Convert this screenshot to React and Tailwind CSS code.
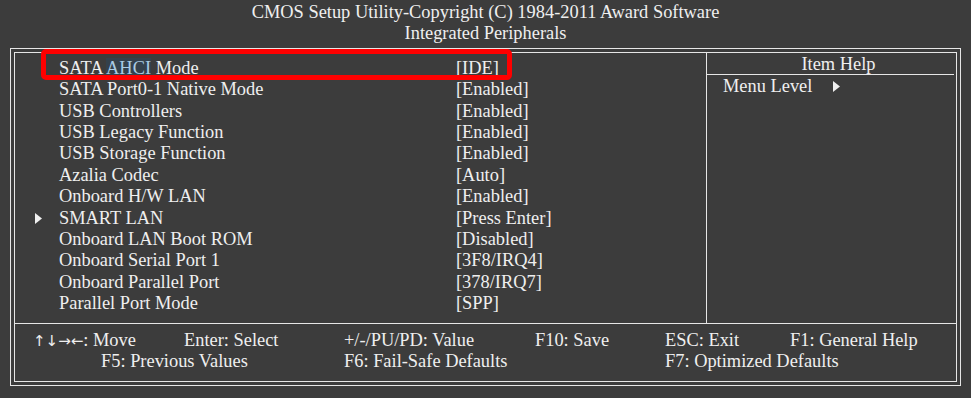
import React from "react";

const rows = [
  ["SATA AHCI Mode", "[IDE]"],
  ["SATA Port0-1 Native Mode", "[Enabled]"],
  ["USB Controllers", "[Enabled]"],
  ["USB Legacy Function", "[Enabled]"],
  ["USB Storage Function", "[Enabled]"],
  ["Azalia Codec", "[Auto]"],
  ["Onboard H/W LAN", "[Enabled]"],
  ["SMART LAN", "[Press Enter]", true],
  ["Onboard LAN Boot ROM", "[Disabled]"],
  ["Onboard Serial Port 1", "[3F8/IRQ4]"],
  ["Onboard Parallel Port", "[378/IRQ7]"],
  ["Parallel Port Mode", "[SPP]"],
];

function Tri({ className }) {
  return (
    <svg width="7" height="11" viewBox="0 0 7 11" className={className}>
      <polygon points="0,0 7,5.5 0,11" fill="#f0f0f0" />
    </svg>
  );
}

export default function App() {
  return (
    <div
      className="relative w-[971px] h-[398px] bg-[#3c3c3c] text-[#efefef] text-[18.4px] overflow-hidden"
      style={{ fontFamily: '"Liberation Serif", "Times New Roman", serif' }}
    >
      <div className="pt-[2px] text-center leading-[21px]">
        <div>CMOS Setup Utility-Copyright (C) 1984-2011 Award Software</div>
        <div>Integrated Peripherals</div>
      </div>
      <div className="mt-[4px] ml-[10px] w-[951px] h-[338px] border border-[#e6e6e6] p-[3px]">
        <div className="h-full border border-[#e6e6e6] flex flex-col">
          <div className="flex h-[271px] border-b border-[#e6e6e6]">
            <div className="w-[692px] border-r border-[#e6e6e6] pt-[5px]">
              {rows.map(([label, value, sub], i) => (
                <div key={i} className="flex h-[21.36px] leading-[21.36px] items-center">
                  <div className="w-[44px] flex items-center pl-[20px]">
                    {sub ? <Tri /> : null}
                  </div>
                  <div className="w-[397px] whitespace-nowrap">
                    {i === 0 ? (
                      <>
                        SATA{" "}
                        <span className="bg-[#34414c] text-[#a9cbe3]">AHCI</span>{" "}
                        Mode
                      </>
                    ) : (
                      label
                    )}
                  </div>
                  <div className="whitespace-nowrap">{value}</div>
                </div>
              ))}
            </div>
            <div className="flex-1 flex flex-col">
              <div className="h-[22px] leading-[22px] mr-[2px] border-b border-[#e6e6e6] text-center pl-[16px]">
                Item Help
              </div>
              <div className="flex items-center pl-[16px] leading-[21px] h-[21px] mt-[1px]">
                <span>Menu Level</span>
                <Tri className="ml-[21px]" />
              </div>
            </div>
          </div>
          <div className="flex-1 pt-[6px] leading-[20px] whitespace-nowrap">
            <div className="flex pl-[18px]">
              <span className="w-[151px]">
                <span
                  className="text-[15px]"
                  style={{ fontFamily: '"DejaVu Sans", sans-serif' }}
                >
                  ↑↓→←
                </span>
                : Move
              </span>
              <span className="w-[160px]">Enter: Select</span>
              <span className="w-[191px]">+/-/PU/PD: Value</span>
              <span className="w-[130px]">F10: Save</span>
              <span className="w-[125px]">ESC: Exit</span>
              <span>F1: General Help</span>
            </div>
            <div className="flex pl-[86px]">
              <span className="w-[243px]">F5: Previous Values</span>
              <span className="w-[321px]">F6: Fail-Safe Defaults</span>
              <span>F7: Optimized Defaults</span>
            </div>
          </div>
        </div>
      </div>
      <div className="absolute left-[41px] top-[49px] w-[471px] h-[31px] border-[5px] border-[#ff0000] rounded-[5px]" />
    </div>
  );
}
